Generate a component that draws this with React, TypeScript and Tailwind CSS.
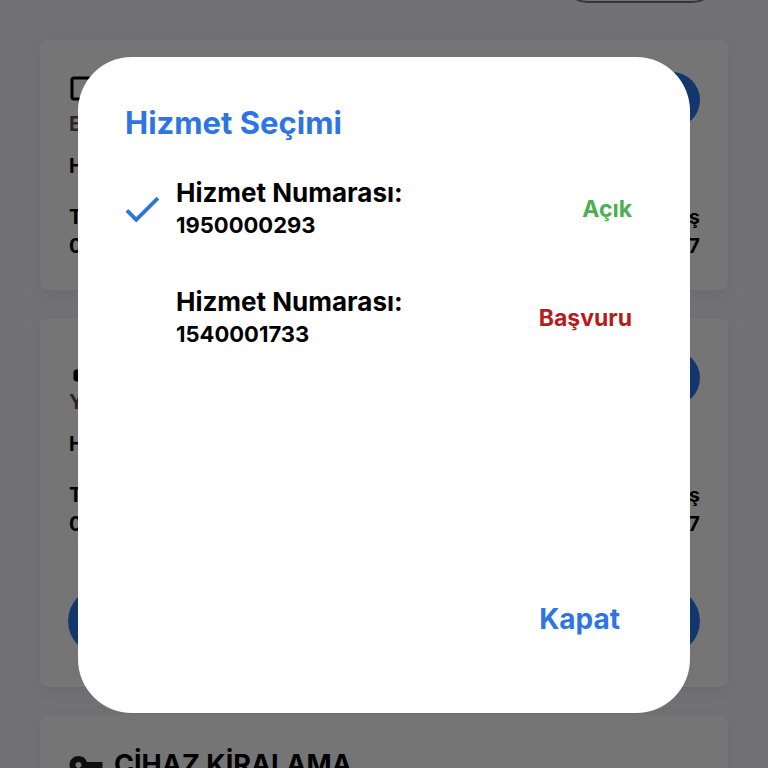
import React, { useState } from 'react';
import { MdCheck, MdRouter, MdTv, MdVpnKey } from 'react-icons/md';

interface Service {
  number: string;
  status: string;
  statusClass: string;
}

interface SubscriptionCardProps {
  icon: React.ReactNode;
  title: string;
  children?: React.ReactNode;
}

const services: Service[] = [
  { number: '1950000293', status: 'Açık', statusClass: 'text-[#4caf50]' },
  { number: '1540001733', status: 'Başvuru', statusClass: 'text-[#b71c1c]' },
];

const SubscriptionCard: React.FC<SubscriptionCardProps> = ({ icon, title, children }) => (
  <section className="rounded-lg bg-white px-7 py-8 shadow-[0_4px_16px_rgba(0,0,0,0.08)]">
    <div className="flex items-start justify-between">
      <div className="pl-px">
        {icon}
        <h2 className="mt-1 text-[#555]">{title}</h2>
      </div>
      <button aria-label="Detay" className="size-14 rounded-full bg-[#2b78ee]" />
    </div>
    <p className="mt-[18px] pl-px">Hizmet Numarası</p>
    <div className="mt-[27px] flex justify-between pl-px">
      <div className="flex flex-col gap-[5px]">
        <span>Taahhüt Başlangıç</span>
        <span>01.01.2025</span>
      </div>
      <div className="flex flex-col gap-[5px] text-right">
        <span>Taahhüt Bitiş</span>
        <span>01.01.2027</span>
      </div>
    </div>
    {children}
  </section>
);

const ServiceDialog: React.FC = () => {
  const [selected, setSelected] = useState('1950000293');

  return (
    <div className="fixed inset-0 flex bg-black/54 px-[78px] pt-[57px] pb-[55px]">
      <div
        role="dialog"
        aria-labelledby="dialog-title"
        className="flex w-full flex-col rounded-[54px] bg-white pt-12 pr-[58px] pb-[76px] pl-[41px]"
      >
        <h1 id="dialog-title" className="ml-1.5 text-[31px] leading-9 font-bold text-[#2f74e4]">
          Hizmet Seçimi
        </h1>
        <div className="mt-9 flex flex-col gap-[45px]">
          {services.map((service) => (
            <button
              key={service.number}
              onClick={() => setSelected(service.number)}
              className="flex w-full items-center text-left font-bold"
            >
              <span className="mr-[11px] w-[46px] shrink-0">
                {selected === service.number && <MdCheck size={46} className="text-[#2f74e4]" />}
              </span>
              <span className="flex flex-1 flex-col leading-8">
                <span className="text-[26px]">Hizmet Numarası:</span>
                <span className="text-[22px]">{service.number}</span>
              </span>
              <span className={`text-[23px] ${service.statusClass}`}>{service.status}</span>
            </button>
          ))}
        </div>
        <button className="mt-auto mr-3 self-end text-[28px] leading-9 font-bold text-[#2f74e4]">
          Kapat
        </button>
      </div>
    </div>
  );
};

export default function App() {
  return (
    <div className="h-screen overflow-hidden bg-[#f8f8fc] font-['Inter',sans-serif] text-black">
      <header className="flex h-[3px] items-end justify-end overflow-hidden px-12">
        <button aria-label="Filtre" className="h-14 w-40 shrink-0 rounded-full border-2 border-[#777]" />
      </header>
      <main className="mx-10 mt-[37px] flex flex-col gap-7 text-xl leading-6 font-bold">
        <SubscriptionCard icon={<MdTv size={36} />} title="Ev Televizyonu" />
        <SubscriptionCard icon={<MdRouter size={36} />} title="Yalın İnternet">
          <button aria-label="Devam" className="mt-[51px] block h-[68px] w-full rounded-full bg-[#2b78ee]" />
        </SubscriptionCard>
        <section className="flex items-center gap-2.5 rounded-lg bg-white px-7 py-8 shadow-[0_4px_16px_rgba(0,0,0,0.08)]">
          <MdVpnKey size={36} className="text-[#222]" />
          <h2 className="text-[27px] leading-9">CİHAZ KİRALAMA</h2>
        </section>
      </main>
      <ServiceDialog />
    </div>
  );
}
